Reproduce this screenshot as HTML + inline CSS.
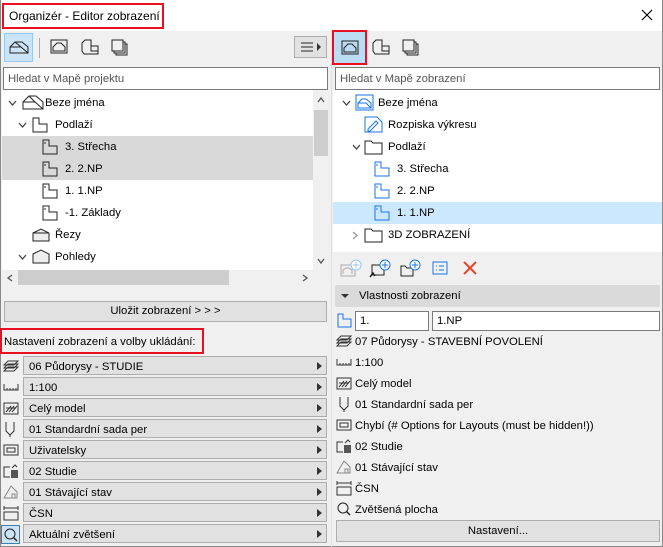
<!DOCTYPE html>
<html><head><meta charset="utf-8">
<style>
*{box-sizing:border-box;margin:0;padding:0}
body{width:663px;height:547px;overflow:hidden;background:#f0f0f0;font-family:"Liberation Sans",sans-serif;font-size:11.3px;color:#000;position:relative}
.a{position:absolute}
.t{position:absolute;white-space:nowrap;line-height:14px}
svg{position:absolute;overflow:visible}
.dd{position:absolute;left:23px;width:304px;height:19px;background:#e1e1e1;border:1px solid #adadad;padding-left:5px;line-height:18px;padding-top:1px}
.dd:after{content:"";position:absolute;right:4px;top:5px;border-left:5px solid #333;border-top:4px solid transparent;border-bottom:4px solid transparent}
</style></head><body>
<div class="a" style="left:0;top:0;width:663px;height:31px;background:#fff"></div>
<div class="a" style="left:0;top:0;width:663px;height:547px;border:1px solid #888;border-top:none"></div>
<div class="a" style="left:2px;top:3px;width:162px;height:26px;border:2px solid #e81123"></div>
<div class="t" style="left:9px;top:9px;font-size:12px">Organizér - Editor zobrazení</div>
<svg style="left:641px;top:9px" width="12" height="12"><path d="M1 1L11 11M11 1L1 11" stroke="#000" stroke-width="1.2"/></svg>

<div class="a" style="left:4px;top:33px;width:29px;height:29px;background:#cce4f7;border:1px solid #99c9ef"></div>
<svg style="left:9px;top:40px" width="20" height="14"><path d="M1 13V7L6 2H13L19 7V13ZM1 7H12L19 13M12 7L6 2" fill="none" stroke="#222"/></svg>
<div class="a" style="left:39px;top:38px;width:1px;height:20px;background:#aaa"></div>
<svg style="left:50px;top:39px" width="18" height="16"><rect x="1" y="1" width="16" height="13" fill="none" stroke="#222"/><path d="M3 12V8L7 4H11L15 8V12Z" fill="none" stroke="#222"/></svg>
<svg style="left:81px;top:39px" width="18" height="16"><path d="M4 1H10V7H17V15H3L1 12V4Z M10 7V12H17" fill="none" stroke="#222"/></svg>
<svg style="left:111px;top:39px" width="18" height="18"><rect x="1" y="1" width="11" height="11" fill="none" stroke="#222"/><path d="M3 12V14H14V3H12M5 14V16H16V5H14" fill="none" stroke="#222"/></svg>
<div class="a" style="left:294px;top:36px;width:33px;height:22px;background:#e1e1e1;border:1px solid #adadad"></div>
<svg style="left:300px;top:42px" width="22" height="10"><path d="M1 1H13M1 5H13M1 9H13" stroke="#222"/><path d="M17 1L21 5L17 9Z" fill="#333"/></svg>

<div class="a" style="left:3px;top:67px;width:325px;height:23px;background:#fff;border:1px solid #7a7a7a"></div>
<div class="t" style="left:8px;top:72px;color:#555">Hledat v Mapě projektu</div>

<div class="a" style="left:2px;top:90px;width:312px;height:180px;background:#fff"></div>
<div class="a" style="left:2px;top:136px;width:311px;height:44px;background:#d9d9d9"></div>
<div class="a" style="left:313px;top:90px;width:15px;height:180px;background:#f0f0f0"></div>
<div class="a" style="left:314px;top:110px;width:14px;height:46px;background:#cdcdcd"></div>
<svg style="left:317px;top:97px" width="8" height="6"><path d="M1 5L4 1L7 5" fill="none" stroke="#555" stroke-width="1.3"/></svg>
<svg style="left:317px;top:258px" width="8" height="6"><path d="M1 1L4 5L7 1" fill="none" stroke="#555" stroke-width="1.3"/></svg>
<div class="a" style="left:18px;top:270px;width:211px;height:15px;background:#cdcdcd"></div>
<svg style="left:7px;top:274px" width="6" height="8"><path d="M5 1L1 4L5 7" fill="none" stroke="#555" stroke-width="1.3"/></svg>
<svg style="left:302px;top:274px" width="6" height="8"><path d="M1 1L5 4L1 7" fill="none" stroke="#555" stroke-width="1.3"/></svg>

<svg style="left:8px;top:100px" width="9" height="6"><path d="M1 1L4.5 5L8 1" fill="none" stroke="#444" stroke-width="1.3"/></svg>
<svg style="left:22px;top:95px" width="22" height="15"><path d="M1 14V7L7 1H14L21 7V14ZM1 7H13L21 14M13 7L7 1" fill="none" stroke="#222"/></svg>
<div class="t" style="left:45px;top:96px">Beze jména</div>
<svg style="left:18px;top:122px" width="9" height="6"><path d="M1 1L4.5 5L8 1" fill="none" stroke="#444" stroke-width="1.3"/></svg>
<svg style="left:32px;top:117px" width="17" height="16"><path d="M1 1H7V7H15V15H1Z" fill="none" stroke="#222"/></svg>
<div class="t" style="left:55px;top:118px">Podlaží</div>
<svg style="left:42px;top:139px" width="17" height="16"><path d="M1 1H7V7H15V15H1Z M3 3V5" fill="none" stroke="#222"/></svg>
<div class="t" style="left:65px;top:140px">3. Střecha</div>
<svg style="left:42px;top:161px" width="17" height="16"><path d="M1 1H7V7H15V15H1Z M3 3V5" fill="none" stroke="#222"/></svg>
<div class="t" style="left:65px;top:162px">2. 2.NP</div>
<svg style="left:42px;top:183px" width="17" height="16"><path d="M1 1H7V7H15V15H1Z M3 3V5" fill="none" stroke="#222"/></svg>
<div class="t" style="left:65px;top:184px">1. 1.NP</div>
<svg style="left:42px;top:205px" width="17" height="16"><path d="M1 1H7V7H15V15H1Z M3 3V5" fill="none" stroke="#222"/></svg>
<div class="t" style="left:65px;top:206px">-1. Základy</div>
<svg style="left:32px;top:228px" width="18" height="14"><path d="M1 5L9 1L17 5V13H1ZM1 5H17" fill="#eee" stroke="#222"/></svg>
<div class="t" style="left:55px;top:228px">Řezy</div>
<svg style="left:18px;top:254px" width="9" height="6"><path d="M1 1L4.5 5L8 1" fill="none" stroke="#444" stroke-width="1.3"/></svg>
<svg style="left:32px;top:249px" width="18" height="15"><path d="M1 5L9 1L17 5V14H1Z" fill="#eee" stroke="#222"/></svg>
<div class="t" style="left:55px;top:250px">Pohledy</div>

<div class="a" style="left:4px;top:301px;width:323px;height:21px;background:#e1e1e1;border:1px solid #adadad;text-align:center;line-height:19px">Uložit zobrazení &gt; &gt; &gt;</div>
<div class="a" style="left:0;top:328px;width:204px;height:26px;border:2px solid #e81123"></div>
<div class="t" style="left:4px;top:335px">Nastavení zobrazení a volby ukládání:</div>

<div class="dd" style="top:356px">06 Půdorysy - STUDIE</div>
<div class="dd" style="top:377px">1:100</div>
<div class="dd" style="top:398px">Celý model</div>
<div class="dd" style="top:419px">01 Standardní sada per</div>
<div class="dd" style="top:440px">Uživatelsky</div>
<div class="dd" style="top:461px">02 Studie</div>
<div class="dd" style="top:482px">01 Stávající stav</div>
<div class="dd" style="top:503px">ČSN</div>
<div class="dd" style="top:524px">Aktuální zvětšení</div>

<svg style="left:3px;top:359px" width="16" height="14"><path d="M1 9L5 5H15L11 9ZM1 6L5 2H15L11 6ZM1 12L5 8H15L11 12Z" fill="none" stroke="#333"/></svg>
<svg style="left:3px;top:383px" width="16" height="8"><path d="M1 1V7H15V1M4 7V5M7 7V5M10 7V5M13 7V5" fill="none" stroke="#333"/></svg>
<svg style="left:3px;top:402px" width="16" height="13"><rect x="1" y="1" width="14" height="11" fill="none" stroke="#333"/><path d="M3 10L8 4M6 10L11 4M9 10L14 4M3 6H13" stroke="#333"/></svg>
<svg style="left:5px;top:421px" width="10" height="16"><path d="M1 1V10L5 14L9 10V1M5 14V16" fill="none" stroke="#333"/></svg>
<svg style="left:3px;top:444px" width="16" height="12"><rect x="1" y="1" width="14" height="10" fill="none" stroke="#333"/><rect x="4" y="4" width="8" height="4" fill="none" stroke="#333"/></svg>
<svg style="left:3px;top:463px" width="16" height="16"><path d="M7 4H1V14H7" fill="none" stroke="#333"/><rect x="8" y="7" width="7" height="8" fill="#555"/><path d="M9 5L12 2L14 4" fill="none" stroke="#333"/></svg>
<svg style="left:3px;top:484px" width="16" height="16"><path d="M1 14L8 2L14 8V14ZM9 14V10H12V14" fill="none" stroke="#888"/></svg>
<svg style="left:3px;top:505px" width="16" height="16"><path d="M1 1V5M15 1V5M1 3H15" stroke="#333"/><rect x="1" y="7" width="14" height="8" fill="none" stroke="#333"/></svg>
<div class="a" style="left:1px;top:525px;width:19px;height:19px;background:#cce4f7;border:1px solid #3c7fb1"></div>
<svg style="left:4px;top:528px" width="14" height="14"><circle cx="6" cy="6" r="5" fill="none" stroke="#222"/><path d="M9.5 9.5L13 13" stroke="#222" stroke-width="1.4"/></svg>

<div class="a" style="left:331px;top:31px;width:1px;height:516px;background:#e0e0e0"></div>
<div class="a" style="left:332px;top:30px;width:35px;height:35px;border:2px solid #e81123;background:#bcdcf4"></div>
<svg style="left:341px;top:40px" width="18" height="16"><rect x="1" y="1" width="16" height="13" fill="none" stroke="#222"/><path d="M3 12V8L7 4H11L15 8V12Z" fill="none" stroke="#222"/></svg>
<svg style="left:372px;top:39px" width="18" height="16"><path d="M4 1H10V7H17V15H3L1 12V4Z M10 7V12H17" fill="none" stroke="#222"/></svg>
<svg style="left:402px;top:39px" width="18" height="18"><rect x="1" y="1" width="11" height="11" fill="none" stroke="#222"/><path d="M3 12V14H14V3H12M5 14V16H16V5H14" fill="none" stroke="#222"/></svg>

<div class="a" style="left:335px;top:67px;width:325px;height:23px;background:#fff;border:1px solid #7a7a7a"></div>
<div class="t" style="left:340px;top:72px;color:#555">Hledat v Mapě zobrazení</div>

<div class="a" style="left:333px;top:90px;width:329px;height:162px;background:#fff"></div>
<div class="a" style="left:333px;top:202px;width:329px;height:22px;background:#cce8ff"></div>
<svg style="left:342px;top:100px" width="9" height="6"><path d="M1 1L4.5 5L8 1" fill="none" stroke="#444" stroke-width="1.3"/></svg>
<svg style="left:355px;top:94px" width="19" height="17"><rect x="1" y="1" width="17" height="15" fill="none" stroke="#1a73e8"/><path d="M3 14V9L7 5H11L16 9V14ZM3 9H11L16 14" fill="none" stroke="#1a73e8"/></svg>
<div class="t" style="left:378px;top:96px">Beze jména</div>
<svg style="left:364px;top:116px" width="19" height="17"><path d="M1 1H13L18 6V16H1Z" fill="none" stroke="#1a73e8"/><path d="M4 13L12 5L14 7L6 15H4Z" fill="none" stroke="#1a73e8"/></svg>
<div class="t" style="left:388px;top:118px">Rozpiska výkresu</div>
<svg style="left:352px;top:144px" width="9" height="6"><path d="M1 1L4.5 5L8 1" fill="none" stroke="#444" stroke-width="1.3"/></svg>
<svg style="left:364px;top:140px" width="19" height="15"><path d="M1 1H7L9 3H18V14H1Z" fill="none" stroke="#222"/></svg>
<div class="t" style="left:388px;top:140px">Podlaží</div>
<svg style="left:374px;top:161px" width="17" height="16"><path d="M1 1H7V7H15V15H1Z M3 3V5" fill="none" stroke="#1a73e8"/></svg>
<div class="t" style="left:397px;top:162px">3. Střecha</div>
<svg style="left:374px;top:183px" width="17" height="16"><path d="M1 1H7V7H15V15H1Z M3 3V5" fill="none" stroke="#1a73e8"/></svg>
<div class="t" style="left:397px;top:184px">2. 2.NP</div>
<svg style="left:374px;top:205px" width="17" height="16"><path d="M1 1H7V7H15V15H1Z M3 3V5" fill="none" stroke="#1a73e8"/></svg>
<div class="t" style="left:397px;top:206px">1. 1.NP</div>
<svg style="left:352px;top:231px" width="6" height="9"><path d="M1 1L5 4.5L1 8" fill="none" stroke="#999" stroke-width="1.3"/></svg>
<svg style="left:364px;top:228px" width="19" height="15"><path d="M1 1H7L9 3H18V14H1Z" fill="none" stroke="#222"/></svg>
<div class="t" style="left:388px;top:228px">3D ZOBRAZENÍ</div>

<svg style="left:340px;top:259px" width="22" height="18"><rect x="1" y="6" width="14" height="11" fill="none" stroke="#aaa"/><path d="M3 15V11L6 9H9L12 11V15" fill="none" stroke="#aaa"/><circle cx="16" cy="6" r="5" fill="#fff" stroke="#9cc3ef"/><path d="M16 3V9M13 6H19" stroke="#9cc3ef"/></svg>
<svg style="left:369px;top:259px" width="22" height="20"><rect x="3" y="6" width="12" height="10" fill="none" stroke="#222"/><path d="M1 18L4 14L6 17" fill="none" stroke="#222" stroke-width="1.5"/><circle cx="16" cy="6" r="5" fill="#fff" stroke="#1a73e8"/><path d="M16 3V9M13 6H19" stroke="#1a73e8"/></svg>
<svg style="left:400px;top:259px" width="22" height="18"><path d="M1 7H5L7 9H13V17H1Z" fill="none" stroke="#222"/><circle cx="15" cy="6" r="5" fill="#fff" stroke="#1a73e8"/><path d="M15 3V9M12 6H18" stroke="#1a73e8"/></svg>
<svg style="left:432px;top:261px" width="16" height="14"><rect x="1" y="1" width="14" height="12" fill="none" stroke="#1a73e8"/><path d="M4 5H5M7 5H12M4 9H5M7 9H12" stroke="#1a73e8"/></svg>
<svg style="left:463px;top:261px" width="14" height="14"><path d="M1 1L13 13M13 1L1 13" stroke="#e8432c" stroke-width="2"/></svg>

<div class="a" style="left:335px;top:285px;width:325px;height:22px;background:#dadada;border-radius:2px"></div>
<svg style="left:341px;top:294px" width="8" height="5"><path d="M0 0H8L4 4Z" fill="#333"/></svg>
<div class="t" style="left:359px;top:289px">Vlastnosti zobrazení</div>

<svg style="left:337px;top:313px" width="15" height="15"><path d="M1 1H6V6H14V14H1Z" fill="none" stroke="#1a73e8"/></svg>
<div class="a" style="left:355px;top:311px;width:74px;height:20px;background:#fff;border:1px solid #7a7a7a"></div>
<div class="t" style="left:360px;top:314px">1.</div>
<div class="a" style="left:432px;top:311px;width:228px;height:20px;background:#fff;border:1px solid #7a7a7a"></div>
<div class="t" style="left:437px;top:314px">1.NP</div>

<svg style="left:336px;top:334px" width="16" height="14"><path d="M1 9L5 5H15L11 9ZM1 6L5 2H15L11 6ZM1 12L5 8H15L11 12Z" fill="none" stroke="#333"/></svg>
<div class="t" style="left:355px;top:335px">07 Půdorysy - STAVEBNÍ POVOLENÍ</div>
<svg style="left:336px;top:358px" width="16" height="8"><path d="M1 1V7H15V1M4 7V5M7 7V5M10 7V5M13 7V5" fill="none" stroke="#333"/></svg>
<div class="t" style="left:355px;top:356px">1:100</div>
<svg style="left:336px;top:377px" width="16" height="13"><rect x="1" y="1" width="14" height="11" fill="none" stroke="#333"/><path d="M3 10L8 4M6 10L11 4M9 10L14 4M3 6H13" stroke="#333"/></svg>
<div class="t" style="left:355px;top:377px">Celý model</div>
<svg style="left:339px;top:396px" width="10" height="16"><path d="M1 1V10L5 14L9 10V1M5 14V16" fill="none" stroke="#333"/></svg>
<div class="t" style="left:355px;top:398px">01 Standardní sada per</div>
<svg style="left:336px;top:419px" width="16" height="12"><rect x="1" y="1" width="14" height="10" fill="none" stroke="#333"/><rect x="4" y="4" width="8" height="4" fill="none" stroke="#333"/></svg>
<div class="t" style="left:355px;top:419px">Chybí (# Options for Layouts (must be hidden!))</div>
<svg style="left:336px;top:438px" width="16" height="16"><path d="M7 4H1V14H7" fill="none" stroke="#333"/><rect x="8" y="7" width="7" height="8" fill="#555"/><path d="M9 5L12 2L14 4" fill="none" stroke="#333"/></svg>
<div class="t" style="left:355px;top:440px">02 Studie</div>
<svg style="left:336px;top:459px" width="16" height="16"><path d="M1 14L8 2L14 8V14ZM9 14V10H12V14" fill="none" stroke="#888"/></svg>
<div class="t" style="left:355px;top:461px">01 Stávající stav</div>
<svg style="left:336px;top:480px" width="16" height="16"><path d="M1 1V5M15 1V5M1 3H15" stroke="#333"/><rect x="1" y="7" width="14" height="8" fill="none" stroke="#333"/></svg>
<div class="t" style="left:355px;top:482px">ČSN</div>
<svg style="left:337px;top:502px" width="14" height="14"><circle cx="6" cy="6" r="5" fill="none" stroke="#222"/><path d="M9.5 9.5L13 13" stroke="#222" stroke-width="1.4"/></svg>
<div class="t" style="left:355px;top:503px">Zvětšená plocha</div>

<div class="a" style="left:336px;top:520px;width:324px;height:22px;background:#e1e1e1;border:1px solid #adadad;text-align:center;line-height:20px">Nastavení...</div>
</body></html>
